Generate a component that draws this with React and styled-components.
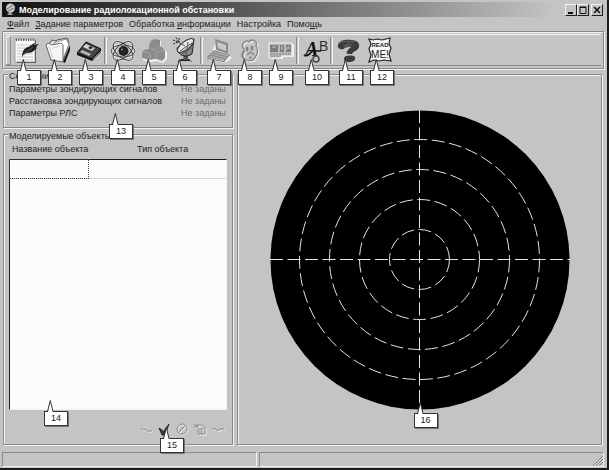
import styled, { createGlobalStyle, css } from 'styled-components';

const FACE = '#c4c4c4';
const SHADOW = '#8a8a8a';
const LIGHT = '#f2f2f2';
const INK = '#1c1c1c';

const GlobalStyle = createGlobalStyle`
  * {
    box-sizing: border-box;
  }

  body {
    margin: 0;
    background: ${FACE};
    color: ${INK};
    font-family: 'Liberation Sans', Arial, sans-serif;
    font-size: 9px;
    line-height: 12px;
  }

  button {
    padding: 0;
    border: 0;
    background: none;
    color: inherit;
    font: inherit;
  }
`;

const etched = css`
  border: 1px solid ${SHADOW};
  box-shadow: 1px 1px 0 ${LIGHT}, inset 1px 1px 0 ${LIGHT};
`;

const Window = styled.div`
  display: flex;
  flex-direction: column;
  min-height: 100vh;
  padding: 2px 3px 1px 2px;
  border-right: 2px solid ${INK};
  border-bottom: 2px solid ${INK};
  background: ${FACE};
`;

const TitleBar = styled.header`
  display: flex;
  align-items: center;
  height: 15px;
  padding: 0 1px 0 2px;
  gap: 2px;
  background: linear-gradient(90deg, #111 0%, #4c4c4c 33%, #8c8c8c 66%, ${FACE} 92%);
`;

const Title = styled.h1`
  flex: 1;
  margin: 0;
  color: white;
  font-size: 9px;
  line-height: 14px;
  white-space: nowrap;
`;

const WindowButtons = styled.div`
  display: flex;
`;

const WindowButton = styled.button`
  display: grid;
  place-items: center;
  width: 12px;
  height: 12px;
  margin-left: ${({ $apart }) => ($apart ? '2px' : 0)};
  border: 1px solid;
  border-color: ${LIGHT} ${INK} ${INK} ${LIGHT};
  background: ${FACE};
`;

const MenuBar = styled.nav`
  display: flex;
  align-items: center;
  height: 14px;
  padding: 0 5px;
  gap: 6px;
`;

const Access = styled.span`
  text-decoration: underline;
`;

const Toolbar = styled.div`
  ${etched}
  height: 38px;
  padding: 2px;
`;

const ToolStrip = styled.div`
  display: flex;
  align-items: center;
  height: 32px;
  padding-left: 1px;
  border-top: 1px solid ${LIGHT};
  border-bottom: 1px solid ${SHADOW};

  &::before {
    content: '';
    width: 3px;
    height: 27px;
    border: 1px solid;
    border-color: ${LIGHT} ${SHADOW} ${SHADOW} ${LIGHT};
  }
`;

const Separator = styled.span`
  width: 3px;
  height: 27px;
  border-left: 1px solid ${SHADOW};
  border-right: 1px solid ${LIGHT};
`;

const ToolButton = styled.button`
  position: relative;
  display: grid;
  place-items: center;
  width: 31px;
  height: 30px;
`;

const CalloutBody = styled.span`
  position: absolute;
  z-index: 2;
  left: ${({ $left }) => $left};
  top: ${({ $top }) => $top};
  width: 24px;
  padding-top: 11px;
  pointer-events: none;

  svg {
    position: absolute;
    left: 3px;
    top: 0;
  }
`;

const CalloutLabel = styled.span`
  display: block;
  height: 15px;
  border: 1px solid #333;
  box-shadow: 1px 1px 0 #777;
  background: white;
  color: ${INK};
  font-size: 9px;
  line-height: 13px;
  text-align: center;
`;

const Workspace = styled.main`
  display: grid;
  grid-template-columns: 230px 1fr;
  flex: 1;
  gap: 4px;
  padding: 5px 2px 7px 1px;
`;

const Sidebar = styled.div`
  display: flex;
  flex-direction: column;
  gap: 6px;
`;

const Group = styled.section`
  ${etched}
  position: relative;
  display: flex;
  flex-direction: column;
  flex: ${({ $grow }) => ($grow ? 1 : 'none')};
  padding: 0 5px 6px;
`;

const GroupTitle = styled.h2`
  align-self: flex-start;
  height: 12px;
  margin: -5px 0 0 -1px;
  padding: 0 1px;
  background: ${FACE};
  font-size: 9px;
  font-weight: normal;
`;

const StatusList = styled.dl`
  display: grid;
  grid-template-columns: 1fr 46px;
  margin: 1px 0 2px;

  dd {
    margin: 0;
    color: #6c6c6c;
  }
`;

const ObjectTable = styled.table`
  display: flex;
  flex-direction: column;
  flex: 1;
  text-align: left;

  tr {
    display: grid;
  }

  thead tr {
    grid-template-columns: 59% 1fr;
    padding: 1px 3px 4px;
  }

  th {
    padding: 0;
    font-weight: normal;
  }

  tbody {
    flex: 1;
    border: 1px solid;
    border-color: ${INK} ${LIGHT} ${LIGHT} ${INK};
    background: #fcfcfc;
  }

  tbody tr {
    grid-template-columns: 36% 1fr;
    border-bottom: 1px solid #d4d4d4;
  }

  td {
    height: 18px;
    padding: 0;
  }

  td:first-child {
    outline: 1px dotted #444;
  }
`;

const EditBar = styled.div`
  display: flex;
  justify-content: flex-end;
  height: 28px;
  padding-top: 10px;
`;

const EditButton = styled.button`
  position: relative;
  display: grid;
  place-items: center;
  width: 18px;
  height: 18px;
`;

const Screen = styled.section`
  ${etched}
  display: grid;
  place-items: center;
`;

const RadarFrame = styled.div`
  position: relative;
  width: 300px;
  max-width: 100%;

  > svg {
    display: block;
    width: 100%;
  }
`;

const StatusBar = styled.footer`
  display: grid;
  grid-template-columns: 255px 1fr;
  gap: 2px;
  height: 15px;
`;

const StatusCell = styled.div`
  display: flex;
  align-items: flex-end;
  justify-content: flex-end;
  border: 1px solid;
  border-color: ${SHADOW} ${LIGHT} ${LIGHT} ${SHADOW};
`;

const Callout = ({ number, left, top }) => (
  <CalloutBody $left={left} $top={top}>
    <CalloutLabel>{number}</CalloutLabel>
    <svg width="7" height="13" viewBox="0 0 7 13">
      <path d="M1 12 L3.3 1 L6 12 Z" fill="white" />
      <path d="M0.5 11.5 L3.3 0.5 L6 11.5" fill="none" stroke="#333" />
    </svg>
  </CalloutBody>
);

const Icon = ({ children, ...rest }) => (
  <svg width="26" height="26" viewBox="0 0 26 26" aria-hidden="true" {...rest}>
    {children}
  </svg>
);

const NotepadIcon = () => (
  <Icon>
    <path d="M3 3H22V26H3Z" fill="#555" />
    <path d="M1 2H21V25H1Z" fill="#fafafa" stroke="#777" strokeWidth="0.6" />
    <path d="M3 8H19M3 11H19M3 14H19M3 17H19M3 20H19M3 23H19" stroke="#c4c4c4" />
    <path d="M2 3H21" stroke="#444" strokeWidth="2" strokeDasharray="1 1.4" />
    <path
      d="M8 20C8 15 10 11 14 10C17 9 19 6 21 6L20 8L25 7L22 10L23 11C20 13 19 16 14 16C11 16 9 18 8 20Z"
      fill="#222"
    />
    <path d="M9 18L19 10" stroke="#777" strokeWidth="0.7" />
  </Icon>
);

const FolderIcon = () => (
  <Icon>
    <path d="M18 25L25 8L25 13L20 26Z" fill="#111" />
    <path d="M4 7L7 3L11 4L12 3L22 1L24 6L18 24L6 23Z" fill="#ddd" stroke="#555" />
    <path d="M9 6L21 2L24 7L18 22Z" fill="#fff" stroke="#777" strokeWidth="0.7" />
    <path d="M1 8L3 6L7 8L16 6L18 8L18 25L6 23Z" fill="#f5f5f5" stroke="#666" />
    <path d="M4 9L8 21M8 11L15 9" stroke="#ccc" />
  </Icon>
);

const FloppyIcon = () => (
  <Icon>
    <path d="M1 16L10 5L25 12V15L16 24L1 18Z" fill="#161616" />
    <path d="M1 16L10 5L25 12L16 22Z" fill="#444" stroke="#111" />
    <path d="M10 7L19 11L16 14L7 10Z" fill="#d8d8d8" />
    <path d="M14 9L17 10.4L15 12.4L12 11Z" fill="#333" />
    <path d="M6 13L15 17L13 19L4 15Z" fill="#bbb" />
    <path d="M17 22L25 14" stroke="#888" />
  </Icon>
);

const AtomIcon = () => (
  <Icon>
    <g fill="none" stroke="#e4e4e4" strokeWidth="2.4">
      <ellipse cx="13" cy="14" rx="12" ry="6" />
      <ellipse cx="13" cy="14" rx="12" ry="6.5" transform="rotate(42 13 14)" />
      <ellipse cx="13" cy="14" rx="12" ry="6.5" transform="rotate(-42 13 14)" />
    </g>
    <g fill="none" stroke="#444">
      <ellipse cx="13" cy="14" rx="12" ry="6" />
      <ellipse cx="13" cy="14" rx="12" ry="6.5" transform="rotate(42 13 14)" />
      <ellipse cx="13" cy="14" rx="12" ry="6.5" transform="rotate(-42 13 14)" />
    </g>
    <circle cx="13.5" cy="14" r="5" fill="#222" />
    <circle cx="12" cy="12.5" r="1" fill="#888" />
  </Icon>
);

const BlocksIcon = () => (
  <Icon>
    <path
      d="M10 4L13 2L19 3V9L22 11L25 14V21L21 25L15 23L8 24L1 22V16L3 13L8 12V8Z"
      fill="#f2f2f2"
      transform="translate(1 1)"
    />
    <path
      d="M10 4L13 2L19 3V9L22 11L24 14V21L21 24L15 22L8 23L1 21V16L3 13L8 12V8Z"
      fill="#8c8c8c"
    />
    <path d="M9 11L13 13L18 9M3 15L9 16V22M15 22V15L23 13" fill="none" stroke="#a4a4a4" />
  </Icon>
);

const DishIcon = () => (
  <Icon>
    <path d="M6 25L9 22H17L20 25Z" fill="#222" />
    <path d="M12 16H16V23H11Z" fill="#555" />
    <path d="M5 11C6 19 14 21 20 17L22 2Z" fill="#888" stroke="#222" />
    <ellipse
      cx="13.5"
      cy="8.5"
      rx="10"
      ry="4"
      transform="rotate(-38 13.5 8.5)"
      fill="#e8e8e8"
      stroke="#333"
    />
    <path d="M13 9L6 5M8 14L20 6M10 17L21 10M14 18L16 5" stroke="#555" />
    <path d="M1 3L6 5M4 0.5L7 5M1 7L6 5M7 1V5" stroke="#222" strokeDasharray="2 1" />
    <path d="M7 24.5H19" stroke="#fff" strokeWidth="0.7" />
  </Icon>
);

const LaptopIcon = () => (
  <Icon>
    <path d="M9 3L21 7V17L25 20L18 25L2 21Z" fill="#f2f2f2" transform="translate(1 1)" />
    <path d="M9 2L22 6V17L10 13Z" fill="#8c8c8c" />
    <path d="M11 5L20 8V14L12 11Z" fill="#c8c8c8" />
    <path d="M1 20L8 13L24 18L19 24Z" fill="#8c8c8c" />
    <path d="M6 17L20 21M4 19L18 23M8 15L22 19" stroke="#c8c8c8" strokeDasharray="2 1" />
    <path d="M1 21L19 25" stroke="#777" />
  </Icon>
);

const HeadsIcon = () => (
  <Icon>
    <g fill="none" stroke="#f2f2f2" transform="translate(1 1)" strokeWidth="1.4">
      <path d="M7 12C3 8 8 2 12 5C15 1 21 4 19 9C22 14 21 18 16 23C9 25 5 22 6 18Z" />
    </g>
    <g fill="none" stroke="#888" strokeWidth="1.4">
      <path d="M7 12C3 8 8 2 12 5C15 1 21 4 19 9C22 14 21 18 16 23C9 25 5 22 6 18Z" />
      <path d="M8 14C4 16 4 20 8 22M10 18L14 15L17 18M12 21L15 20" />
    </g>
    <ellipse cx="10" cy="12" rx="1.5" ry="2.5" fill="#888" />
    <ellipse cx="15" cy="11" rx="1.5" ry="2.5" fill="#888" />
  </Icon>
);

const BoardIcon = () => (
  <Icon>
    <path d="M1 7H25V20H14V22H2Z" fill="#ececec" transform="translate(1 0)" />
    <path d="M1 6H24V19H13V21H1Z" fill="#b8b8b8" stroke="#f2f2f2" />
    <path d="M2 8H10V15H2ZM12 8H16V15H12ZM18 8H23V15H18Z" fill="#7c7c7c" />
    <path d="M4 10H8M19 10V13M21 9V12M14 9V13" stroke="#c8c8c8" />
    <path d="M2 17H23M3 19H13" stroke="#858585" strokeDasharray="2 1" />
  </Icon>
);

const FontIcon = () => (
  <Icon>
    <text
      x="3"
      y="19"
      fill="#111"
      fontFamily="Liberation Serif, serif"
      fontSize="20"
      fontStyle="italic"
      fontWeight="bold"
    >
      A
    </text>
    <text x="17" y="14" fill="#333" fontFamily="Liberation Sans, sans-serif" fontSize="14">
      B
    </text>
    <path d="M2 18C5 20 8 17 10 14H19" fill="none" stroke="#111" strokeWidth="1.6" />
    <circle cx="14" cy="22" r="3" fill="none" stroke="#444" strokeWidth="1.5" />
  </Icon>
);

const HelpIcon = () => (
  <Icon>
    <path
      d="M2 8C3 3 10 2 15 3C21 3 24 6 23 10C22 14 17 14 16 17L11 17C10 14 13 12 15 10C12 8 9 10 8 12C4 13 1 11 2 8Z"
      fill="#3c3c3c"
    />
    <path d="M7 8L13 6L17 8L13 10L8 11Z" fill="#555" />
    <path d="M8 21C9 18 17 18 19 20C20 23 17 25 13 25C10 25 8 24 8 21Z" fill="#3c3c3c" />
    <path d="M4 6C7 4 12 4 18 5" fill="none" stroke="#666" />
  </Icon>
);

const ReadmeIcon = () => (
  <Icon>
    <path
      d="M2 2L6 3L10 2L15 3L23 1L22 7L24 11L22 17L24 24L17 23L12 24L7 23L2 25L4 18L2 12L4 7Z"
      fill="#f6f6f6"
      stroke="#222"
      strokeWidth="1.2"
    />
    <g fill="#222" fontFamily="Liberation Sans, sans-serif" textAnchor="middle">
      <text x="13" y="10" fontSize="6" fontWeight="bold">
        READ
      </text>
      <text x="13" y="21" fontSize="10">
        ME!
      </text>
    </g>
  </Icon>
);

const TOOL_GROUPS = [
  {
    callout: '6px',
    tools: [
      { number: 1, name: 'Новый', Glyph: NotepadIcon },
      { number: 2, name: 'Открыть', Glyph: FolderIcon },
      { number: 3, name: 'Сохранить', Glyph: FloppyIcon },
    ],
  },
  {
    callout: '4px',
    tools: [
      { number: 4, name: 'Сигналы', Glyph: AtomIcon },
      { number: 5, name: 'Расстановка', Glyph: BlocksIcon },
      { number: 6, name: 'РЛС', Glyph: DishIcon },
    ],
  },
  {
    callout: '4px',
    tools: [
      { number: 7, name: 'Моделирование', Glyph: LaptopIcon },
      { number: 8, name: 'Обработка', Glyph: HeadsIcon },
      { number: 9, name: 'Результаты', Glyph: BoardIcon },
    ],
  },
  { callout: '6px', tools: [{ number: 10, name: 'Шрифт', Glyph: FontIcon }] },
  {
    callout: '6px',
    tools: [
      { number: 11, name: 'Помощь', Glyph: HelpIcon },
      { number: 12, name: 'Описание', Glyph: ReadmeIcon },
    ],
  },
];

const PARAMETERS = [
  'Параметры зондирующих сигналов',
  'Расстановка зондирующих сигналов',
  'Параметры РЛС',
];

const EDIT_ACTIONS = [
  { name: 'Назад', path: 'M1 6L4 8L6 7L8 9H13', muted: true },
  { name: 'Применить', path: 'M2 6L5 8L6 10L12 2L8 13H5Z' },
  { name: 'Отменить', path: 'M7 2A5 5 0 1 0 7.1 2M3 11L11 3', muted: true },
  {
    name: 'Копировать',
    path: 'M1 2L4 5M1 5H4V2M5 3H9L12 6V12H5ZM7 6V12M9 6V12',
    muted: true,
  },
  { name: 'Вперёд', path: 'M1 7H5L7 9L9 7H13', muted: true },
];

const Radar = () => (
  <svg viewBox="0 0 300 300" role="img" aria-label="Индикатор кругового обзора">
    <circle cx="150" cy="150" r="149.5" fill="black" />
    <g fill="none" stroke="#e4e4e4" strokeDasharray="13 4.5">
      {[30, 60, 90, 120].map((r) => (
        <circle key={r} cx="149.5" cy="149.5" r={r} />
      ))}
      <path d="M0 149.5H300" />
      <path d="M149.5 0V300" />
    </g>
  </svg>
);

const App = () => (
  <>
    <GlobalStyle />
    <Window>
      <TitleBar>
        <svg width="13" height="13" viewBox="0 0 13 13" aria-hidden="true">
          <path d="M3 12H9L7 9H5Z" fill="#999" />
          <ellipse cx="6.5" cy="5" rx="4.5" ry="4.5" fill="#ccc" />
          <path d="M3 6L9 2M4 8L10 5" stroke="#666" />
        </svg>
        <Title>Моделирование радиолокационной обстановки</Title>
        <WindowButtons>
          <WindowButton aria-label="Свернуть">
            <svg width="8" height="8" viewBox="0 0 8 8">
              <path d="M1 7H6" stroke="#111" strokeWidth="2" />
            </svg>
          </WindowButton>
          <WindowButton aria-label="Развернуть">
            <svg width="8" height="8" viewBox="0 0 8 8">
              <path d="M1 1H7V7.5H1ZM1 1.5H7" fill="none" stroke="#111" />
            </svg>
          </WindowButton>
          <WindowButton $apart aria-label="Закрыть">
            <svg width="8" height="8" viewBox="0 0 8 8">
              <path d="M1 1L7 7M7 1L1 7" stroke="#111" strokeWidth="1.5" />
            </svg>
          </WindowButton>
        </WindowButtons>
      </TitleBar>

      <MenuBar>
        <button>
          <Access>Ф</Access>айл
        </button>
        <button>
          <Access>З</Access>адание параметров
        </button>
        <button>
          Обработка <Access>и</Access>нформации
        </button>
        <button>Настройка</button>
        <button>
          Помо<Access>щ</Access>ь
        </button>
      </MenuBar>

      <Toolbar>
        <ToolStrip>
          {TOOL_GROUPS.map(({ callout, tools }, i) => [
            i > 0 && <Separator key={`separator-${i}`} />,
            ...tools.map(({ number, name, Glyph }) => (
              <ToolButton key={number} aria-label={name}>
                <Glyph />
                <Callout number={number} left={callout} top="24px" />
              </ToolButton>
            )),
          ])}
        </ToolStrip>
      </Toolbar>

      <Workspace>
        <Sidebar>
          <Group>
            <GroupTitle>Состояние</GroupTitle>
            <StatusList>
              {PARAMETERS.map((name) => [
                <dt key={name}>{name}</dt>,
                <dd key={`${name}-value`}>Не заданы</dd>,
              ])}
            </StatusList>
            <Callout number={13} left="105px" top="38px" />
          </Group>
          <Group $grow>
            <GroupTitle>Моделируемые объекты</GroupTitle>
            <ObjectTable>
              <thead>
                <tr>
                  <th>Название объекта</th>
                  <th>Тип объекта</th>
                </tr>
              </thead>
              <tbody>
                <tr>
                  <td />
                  <td />
                </tr>
              </tbody>
            </ObjectTable>
            <Callout number={14} left="40px" top="265px" />
            <EditBar>
              {EDIT_ACTIONS.map(({ name, path, muted }) => (
                <EditButton key={name} aria-label={name}>
                  <svg width="14" height="14" viewBox="0 0 14 14">
                    {muted && (
                      <path d={path} fill="none" stroke="#f2f2f2" transform="translate(1 1)" />
                    )}
                    <path d={path} fill={muted ? 'none' : '#333'} stroke={muted ? '#8c8c8c' : '#333'} />
                  </svg>
                  {!muted && <Callout number={15} left="5px" top="7px" />}
                </EditButton>
              ))}
            </EditBar>
          </Group>
        </Sidebar>
        <Screen>
          <RadarFrame>
            <Radar />
            <Callout number={16} left="calc(50% - 6px)" top="calc(100% - 8px)" />
          </RadarFrame>
        </Screen>
      </Workspace>

      <StatusBar>
        <StatusCell />
        <StatusCell>
          <svg width="11" height="11" viewBox="0 0 11 11" aria-hidden="true">
            <path d="M1 11L11 1M4 11L11 4M7 11L11 7" stroke="#777" />
            <path d="M2 11L11 2M5 11L11 5M8 11L11 8" stroke="#f2f2f2" strokeWidth="0.6" />
          </svg>
        </StatusCell>
      </StatusBar>
    </Window>
  </>
);

export default App;
